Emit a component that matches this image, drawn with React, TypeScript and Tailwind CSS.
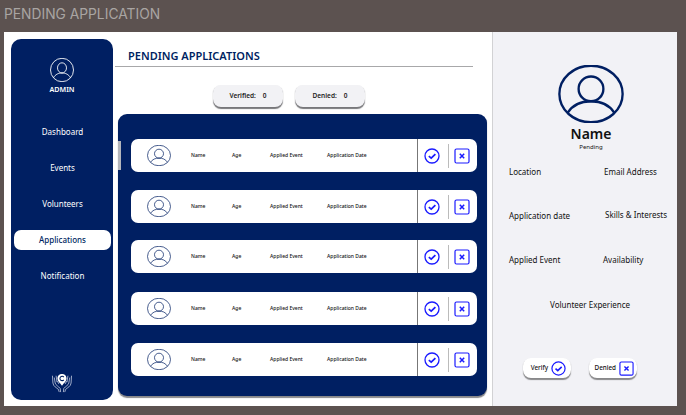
const rowShifts = ["", "", "-mt-px", "mt-px", ""];
const navItems = ["Dashboard", "Events", "Volunteers", "Applications", "Notification"];

function UserIcon({ className, width = 1 }: { className: string; width?: number }) {
  return (
    <svg viewBox="0 0 48 40" className={className} fill="none" stroke="currentColor" strokeWidth={width} preserveAspectRatio="none">
      <ellipse cx="24" cy="20" rx="23" ry="19.5" />
      <ellipse cx="24" cy="16.5" rx="9" ry="8.5" />
      <path d="M7 33 C11 27 17 25 24 25 C31 25 37 27 41 33" />
    </svg>
  );
}

function CheckIcon({ className }: { className: string }) {
  return (
    <svg viewBox="0 0 16 16" className={className} fill="none" stroke="#1a1aff" strokeWidth="1.3">
      <circle cx="8" cy="8" r="7" />
      <path d="M4.8 8.2 L7.2 10.2 L11.4 6.2" strokeWidth="1.7" />
    </svg>
  );
}

function CrossIcon({ className }: { className: string }) {
  return (
    <svg viewBox="0 0 16 16" className={className} fill="none" stroke="#1a1aff" strokeWidth="1.2">
      <rect x="1" y="1" width="14" height="14" rx="1.5" />
      <path d="M5.8 5.8 L10.2 10.2 M10.2 5.8 L5.8 10.2" strokeWidth="1.5" />
    </svg>
  );
}

function Logo() {
  return (
    <svg viewBox="0 0 24 22" className="h-[20px] w-[22px]" fill="none" stroke="#d8dcec" strokeWidth="0.8">
      <path d="M12 1 C8.500 1 7 3.500 7 6 C7 9 10 11 12 14 C14 11 17 9 17 6 C17 3.500 15.500 1 12 1 Z" fill="#ffffff" stroke="none" />
      <path d="M14 4.500 A2.400 2.400 0 1 0 14 7.500" stroke="#001f60" strokeWidth="1.200" />
      <path d="M1.500 3 L2 11 C2.500 15 6 16 8 18 L9 21 M3.500 5 L4.500 11 C5 13.500 8 14.500 10 17 L10.500 21 M5.500 3 L6.500 10 M7 9 L8.500 12" />
      <path d="M22.500 3 L22 11 C21.500 15 18 16 16 18 L15 21 M20.500 5 L19.500 11 C19 13.500 16 14.500 14 17 L13.500 21 M18.500 3 L17.500 10 M17 9 L15.500 12" />
    </svg>
  );
}

function Sidebar() {
  return (
    <aside className="flex h-[361px] w-[102px] shrink-0 flex-col items-center rounded-[10px] bg-[#001f62] pt-[19px] pb-[7px] text-white">
      <UserIcon className="h-[24px] w-[24px] text-white" width={1.6} />
      <div className="mt-[2px] text-[7.200px] leading-[10px] font-semibold">ADMIN</div>
      <nav className="mt-[28px] flex w-full flex-col gap-[16px] pl-[3px] pr-[2px]">
        {navItems.map((item) => (
          <div
            key={item}
            className={
              item === "Applications"
                ? "flex h-[20px] items-center justify-center rounded-[7px] bg-white text-[8px] font-medium text-[#001f62]"
                : "flex h-[20px] items-center justify-center text-[8px] font-normal text-white"
            }
          >
            {item}
          </div>
        ))}
      </nav>
      <div className="mt-auto">
        <Logo />
      </div>
    </aside>
  );
}

function Stat({ label }: { label: string }) {
  return (
    <div className="flex h-[22px] w-[70px] items-center justify-center gap-[7px] rounded-[8px] bg-[#f2f2f5] text-[6.500px] font-semibold text-[#222222] shadow-[0_1.500px_1px_#77777a]">
      <span>{label}:</span>
      <span>0</span>
    </div>
  );
}

function ApplicationRow({ shift }: { shift: string }) {
  return (
    <div className={`flex h-[33px] w-[346px] items-center rounded-[7px] bg-white text-[5px] font-medium text-[#111111] ${shift}`}>
      <UserIcon className="ml-[16px] h-[21px] w-[24px] text-[#001f62]" width={1.4} />
      <span className="ml-[20px] w-[41px]">Name</span>
      <span className="w-[38px]">Age</span>
      <span className="w-[57px]">Applied Event</span>
      <span className="w-[90px]">Application Date</span>
      <div className="flex h-full items-center border-l border-[#777777]">
        <CheckIcon className="ml-[6px] h-[16px] w-[16px]" />
        <div className="ml-[8px] mr-[5px] h-[24px] w-px bg-[#bbbbbb]" />
        <CrossIcon className="h-[16px] w-[16px]" />
      </div>
    </div>
  );
}

function MainColumn() {
  return (
    <main className="ml-[2px] flex w-[373px] shrink-0 flex-col">
      <h1 className="ml-[13px] mt-[9px] text-[11px] leading-[16px] font-semibold text-[#001f62]">PENDING APPLICATIONS</h1>
      <div className="mt-[2px] h-px w-[358px] bg-[#a8a8aa]" />
      <div className="ml-[98px] mt-[18px] flex gap-[12px]">
        <Stat label="Verified" />
        <Stat label="Denied" />
      </div>
      <div className="relative ml-[3px] mt-[7px] flex h-[282px] w-[369px] flex-col gap-[18px] rounded-[9px] bg-[#001f62] pt-[25px] pl-[13px] shadow-[0_1.500px_1px_#88888a]">
        <div className="absolute left-0 top-[27px] h-[29px] w-[3px] bg-[#b4b6bc]" />
        {rowShifts.map((shift, i) => (
          <ApplicationRow key={i} shift={shift} />
        ))}
      </div>
    </main>
  );
}

function Field({ label, className }: { label: string; className: string }) {
  return <span className={`absolute whitespace-nowrap ${className}`}>{label}</span>;
}

function DetailPanel() {
  return (
    <section className="relative ml-[4px] flex h-full w-[185px] flex-col items-center border-l border-[#d2d2d4] bg-[#f2f2f6] pl-[12px] text-[8px] font-normal text-[#111111]">
      <UserIcon className="mt-[33px] h-[58px] w-[66px] text-[#001f62]" width={1.7} />
      <div className="mt-[1px] text-[14px] leading-[19px] font-semibold text-[#111111]">Name</div>
      <div className="text-[6px] leading-[9px] font-normal">Pending</div>
      <Field label="Location" className="left-[16px] top-[134px]" />
      <Field label="Email Address" className="left-[111px] top-[134px]" />
      <Field label="Application date" className="left-[16px] top-[178px]" />
      <Field label="Skills & Interests" className="left-[112px] top-[177px]" />
      <Field label="Applied Event" className="left-[16px] top-[222px]" />
      <Field label="Availability" className="left-[110px] top-[222px]" />
      <Field label="Volunteer Experience" className="left-[57px] top-[267px]" />
      <div className="absolute left-[30px] top-[326px] flex gap-[18px] text-[6.300px] font-medium">
        <div className="flex h-[20px] w-[48px] items-center justify-end gap-[3px] rounded-[8px] bg-white pr-[5px] shadow-[0_1.500px_1px_#88888a]">
          Verify <CheckIcon className="h-[15px] w-[15px]" />
        </div>
        <div className="flex h-[20px] w-[48px] items-center justify-end gap-[3px] rounded-[8px] bg-white pr-[3px] shadow-[0_1.500px_1px_#88888a]">
          Denied <CrossIcon className="h-[15px] w-[15px]" />
        </div>
      </div>
    </section>
  );
}

export default function App() {
  return (
    <div className="flex h-[415px] w-[686px] flex-col bg-[#5c5250] font-['Noto_Sans',sans-serif]">
      <div className="flex h-[32px] items-center pl-[4px] pb-[3px] font-['Inter',sans-serif] text-[13.800px] text-[#a9a5a3]">
        PENDING APPLICATION
      </div>
      <div className="ml-[4px] flex h-[374px] w-[673px] bg-white pl-[7px]">
        <div className="flex pt-[7px]">
          <Sidebar />
          <MainColumn />
        </div>
        <DetailPanel />
      </div>
    </div>
  );
}
